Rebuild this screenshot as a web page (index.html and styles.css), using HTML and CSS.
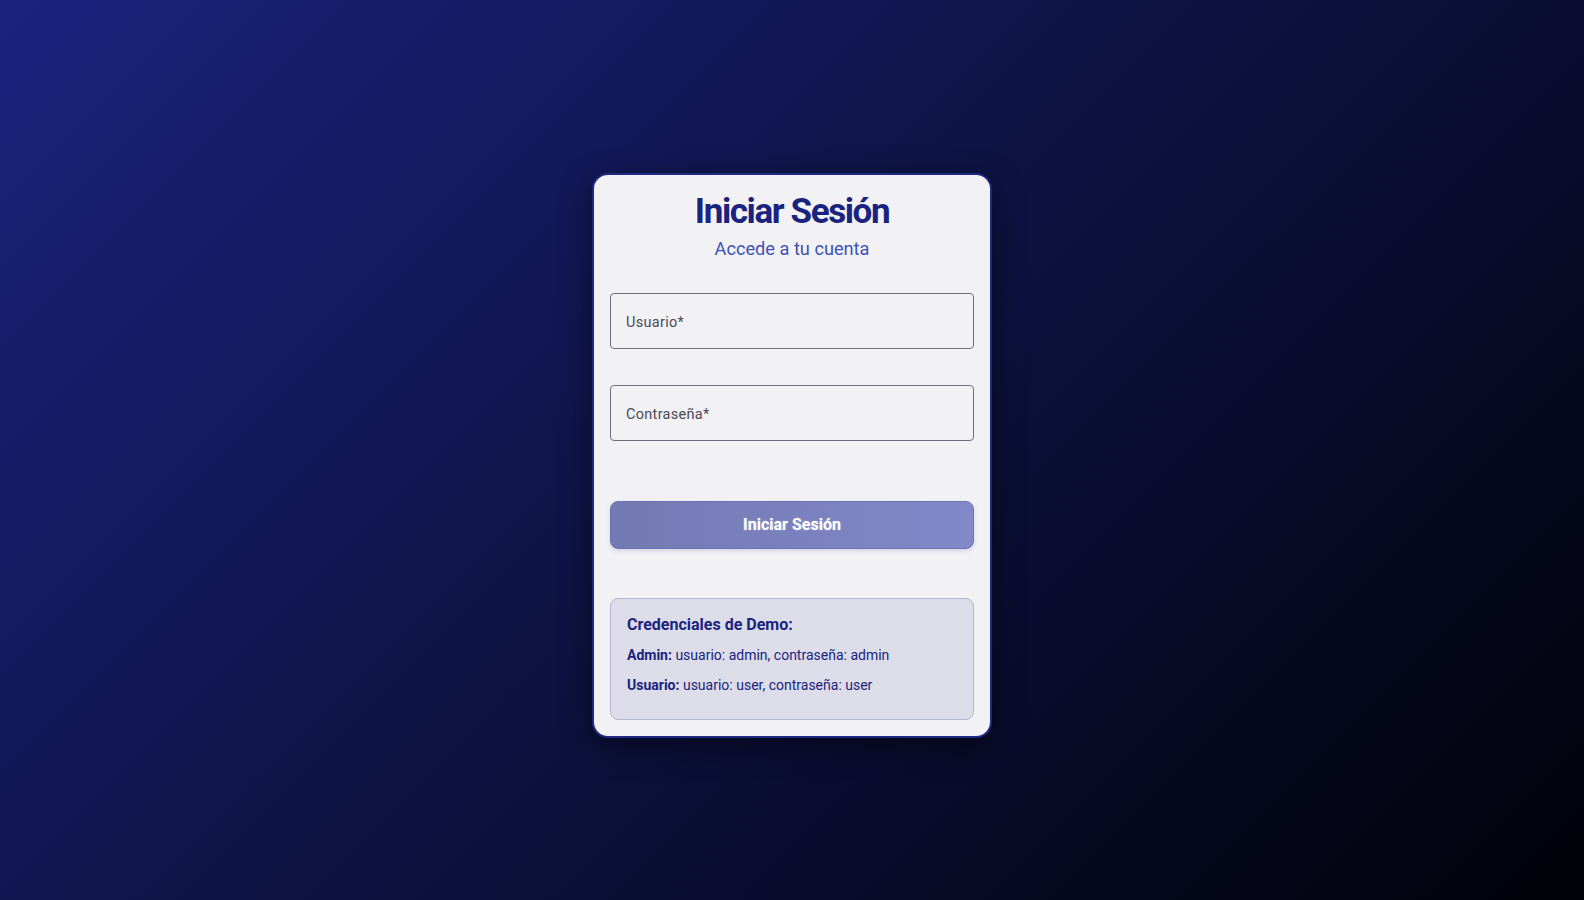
FILE: index.html
```html
<!DOCTYPE html>
<html lang="es">
<head>
<meta charset="utf-8">
<title>Iniciar Sesión</title>
<link rel="stylesheet" href="styles.css">
</head>
<body>
<main class="page">
  <section class="card">
    <h1 class="title">Iniciar Sesión</h1>
    <p class="subtitle">Accede a tu cuenta</p>
    <form class="form">
      <div class="field"><span class="label">Usuario*</span></div>
      <div class="field field-second"><span class="label">Contraseña*</span></div>
      <button type="button" class="submit">Iniciar Sesión</button>
    </form>
    <div class="demo">
      <h2 class="demo-title">Credenciales de Demo:</h2>
      <p class="demo-line"><strong>Admin:</strong> usuario: admin, contraseña: admin</p>
      <p class="demo-line"><strong>Usuario:</strong> usuario: user, contraseña: user</p>
    </div>
  </section>
</main>
</body>
</html>
```

FILE: styles.css
```css
* { box-sizing: border-box; }
html, body { margin: 0; padding: 0; }
body {
  font-family: Roboto, "Liberation Sans", sans-serif;
  background: linear-gradient(135deg, #1a237e 0%, #0d1240 50%, #010108 100%);
  min-height: 100vh;
}
.page {
  min-height: 100vh;
  display: flex;
  align-items: center;
  justify-content: center;
  padding-top: 11px;
}
.card {
  width: 400px;
  background: #f2f2f5;
  border: 2px solid #1f2883;
  border-radius: 16px;
  padding: 16px 16px 16px;
  box-shadow: 0 8px 32px rgba(0, 0, 0, 0.45);
}
.title {
  margin: 0;
  text-align: center;
  font-size: 35px;
  line-height: 41px;
  font-weight: 700;
  letter-spacing: -1.4px;
  color: #1a237e;
}
.subtitle {
  margin: 2px 0 0;
  text-align: center;
  font-size: 18.2px;
  line-height: 30px;
  color: #3f51b5;
}
.form {
  display: flex;
  flex-direction: column;
  margin-top: 29px;
}
.field {
  height: 56px;
  border: 1px solid #6e6e78;
  border-radius: 4px;
  display: flex;
  align-items: center;
  padding: 3px 15px 0;
}
.field-second { margin-top: 36px; }
.label {
  font-size: 14.5px;
  letter-spacing: 0.3px;
  color: #4a4a55;
}
.submit {
  margin-top: 60px;
  height: 48px;
  border: 1px solid #6c73b0;
  border-radius: 8px;
  background: linear-gradient(90deg, #7379b2 0%, #8189c9 100%);
  color: #ffffff;
  font-family: inherit;
  font-size: 16px;
  font-weight: 700;
  text-shadow: 0 0 2px rgba(255, 255, 255, 0.35);
  box-shadow: 0 2px 4px rgba(26, 35, 126, 0.15);
}
.demo {
  margin-top: 49px;
  background: #dcdde8;
  border: 1px solid #b3b6d6;
  border-radius: 8px;
  padding: 16px 16px 16px;
  color: #1a237e;
}
.demo-title {
  margin: 0 0 10px;
  font-size: 16px;
  line-height: 19.2px;
  font-weight: 700;
}
.demo-line {
  margin: 0 0 7px;
  font-size: 14px;
  line-height: 22.4px;
}
.demo-line strong { font-weight: 700; }
```
